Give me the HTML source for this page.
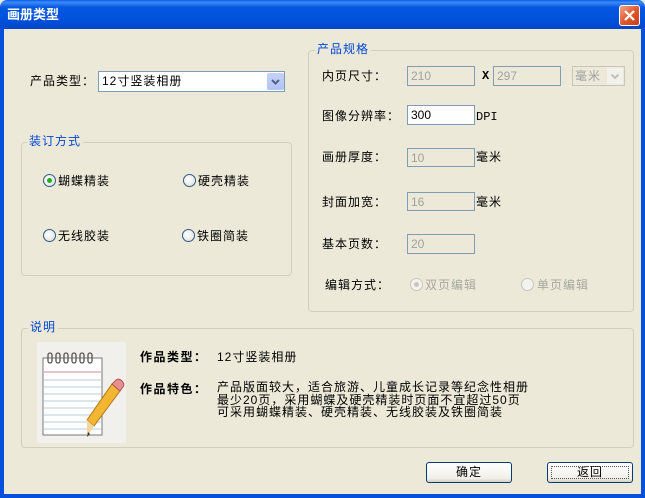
<!DOCTYPE html>
<html><head><meta charset="utf-8">
<style>
*{margin:0;padding:0;box-sizing:border-box}
body{width:645px;height:498px;overflow:hidden;background:#ece9d8;font-family:"Liberation Sans","Noto Sans CJK SC","WenQuanYi Zen Hei",sans-serif;font-size:12px;color:#000;position:relative}
.a{position:absolute;white-space:nowrap;line-height:14px;letter-spacing:1px}
.title{position:absolute;left:0;top:0;width:645px;height:29px;background:linear-gradient(#0a5fe8 0%,#3d8bf7 8%,#0758e0 25%,#0050dc 70%,#0346c8 100%);border-radius:7px 7px 0 0}
.bl{position:absolute;left:0;top:28px;width:4px;height:470px;background:#0750dc}
.br{position:absolute;right:0;top:28px;width:4px;height:470px;background:#0750dc}
.bb{position:absolute;left:0;top:494px;width:645px;height:4px;background:#0750dc}
.close{position:absolute;left:619px;top:5px;width:21px;height:21px;border-radius:3px;border:1px solid #fff;background:linear-gradient(135deg,#f0a58a,#e05a30 50%,#c63c18)}
.grp{position:absolute;border:1px solid #d0d0bf;border-radius:4px}
.leg{position:absolute;background:#ece9d8;color:#0046d5;padding:0 2px;line-height:14px;letter-spacing:1px}
.inp{position:absolute;border:1px solid #7f9db9;background:#ece9d8;color:#a0a0a0;padding-left:3px;line-height:18px;font-size:12px}
.rad{position:absolute;width:13px;height:13px;border-radius:50%;border:1px solid #2c5a88;background:radial-gradient(circle at 40% 40%,#fff,#dcdcd4)}
.radd{border-color:#c8c6bb;background:#f4f3ee}
.btn{position:absolute;height:21px;border:1px solid #003c74;border-radius:3px;background:linear-gradient(#fff,#f0f0ea 80%,#d6d0c5);text-align:center;line-height:19px;letter-spacing:1px}
</style></head><body>
<div class="title"></div>
<div class="a" style="left:7px;top:7px;color:#fff;font-weight:bold;font-size:13px;line-height:15px;letter-spacing:0">画册类型</div>
<div class="close"><svg width="19" height="19" style="position:absolute;left:0;top:0"><path d="M5 5L14 14M14 5L5 14" stroke="#fff" stroke-width="2.2"/></svg></div>
<div class="bl"></div><div class="br"></div><div class="bb"></div>

<div class="a" style="left:30px;top:74px">产品类型：</div>
<div style="position:absolute;left:98px;top:71px;width:187px;height:21px;border:1px solid #7f9db9;background:#fff"></div>
<div class="a" style="left:102px;top:74px">12寸竖装相册</div>
<div style="position:absolute;left:267px;top:73px;width:17px;height:17px;border-radius:2px;background:linear-gradient(#c6d3f7,#b0c4f4)"><svg width="17" height="17"><path d="M5 7L8.5 10.5L12 7" stroke="#4d6185" stroke-width="2" fill="none"/></svg></div>

<div class="grp" style="left:21px;top:142px;width:271px;height:134px"></div>
<div class="leg" style="left:27px;top:134px">装订方式</div>
<div class="rad" style="left:43px;top:174px"><div style="position:absolute;left:3px;top:3px;width:5px;height:5px;border-radius:50%;background:#22b022"></div></div>
<div class="a" style="left:58px;top:174px">蝴蝶精装</div>
<div class="rad" style="left:183px;top:174px"></div>
<div class="a" style="left:198px;top:174px">硬壳精装</div>
<div class="rad" style="left:43px;top:229px"></div>
<div class="a" style="left:58px;top:229px">无线胶装</div>
<div class="rad" style="left:182px;top:229px"></div>
<div class="a" style="left:197px;top:229px">铁圈简装</div>

<div class="grp" style="left:308px;top:50px;width:326px;height:262px"></div>
<div class="leg" style="left:315px;top:42px">产品规格</div>
<div class="a" style="left:322px;top:69px">内页尺寸：</div>
<div class="inp" style="left:407px;top:66px;width:68px;height:20px">210</div>
<div class="a" style="left:482px;top:69px;font-family:'Liberation Mono',monospace;font-weight:bold">X</div>
<div class="inp" style="left:493px;top:66px;width:68px;height:20px">297</div>
<div style="position:absolute;left:572px;top:66px;width:53px;height:20px;border:1px solid #c8c6bb;background:#ece9d8"></div>
<div class="a" style="left:575px;top:69px;color:#a0a0a0">毫米</div>
<div style="position:absolute;left:607px;top:68px;width:16px;height:16px;background:#f2f1ec"><svg width="16" height="16"><path d="M4.5 6.5L8 10L11.5 6.5" stroke="#c0c0b8" stroke-width="2" fill="none"/></svg></div>

<div class="a" style="left:322px;top:109px">图像分辨率：</div>
<div class="inp" style="left:407px;top:105px;width:68px;height:20px;background:#fff;color:#000">300</div>
<div class="a" style="left:476px;top:110px;font-family:'Liberation Mono',monospace;letter-spacing:0">DPI</div>

<div class="a" style="left:322px;top:150px">画册厚度：</div>
<div class="inp" style="left:407px;top:148px;width:68px;height:19px">10</div>
<div class="a" style="left:476px;top:150px">毫米</div>

<div class="a" style="left:322px;top:195px">封面加宽：</div>
<div class="inp" style="left:407px;top:192px;width:68px;height:19px">16</div>
<div class="a" style="left:476px;top:195px">毫米</div>

<div class="a" style="left:322px;top:237px">基本页数：</div>
<div class="inp" style="left:407px;top:234px;width:68px;height:20px">20</div>

<div class="a" style="left:325px;top:278px">编辑方式：</div>
<div class="rad radd" style="left:410px;top:278px"><div style="position:absolute;left:3px;top:3px;width:5px;height:5px;border-radius:50%;background:#c8c6bb"></div></div>
<div class="a" style="left:425px;top:278px;color:#a8a8a0">双页编辑</div>
<div class="rad radd" style="left:521px;top:278px"></div>
<div class="a" style="left:537px;top:278px;color:#a8a8a0">单页编辑</div>

<div class="grp" style="left:21px;top:328px;width:613px;height:120px"></div>
<div class="leg" style="left:28px;top:320px">说明</div>
<div style="position:absolute;left:37px;top:342px;width:89px;height:101px;background:#f1f0ec"></div>
<svg style="position:absolute;left:37px;top:342px" width="89" height="101">
<rect x="6" y="16" width="59" height="77" fill="#fff" stroke="#777"/>
<line x1="7" y1="30" x2="64" y2="30" stroke="#d88a90"/>
<g stroke="#b8cde0"><line x1="7" y1="38" x2="64" y2="38"/><line x1="7" y1="45" x2="64" y2="45"/><line x1="7" y1="52" x2="64" y2="52"/><line x1="7" y1="59" x2="64" y2="59"/><line x1="7" y1="66" x2="64" y2="66"/><line x1="7" y1="73" x2="64" y2="73"/><line x1="7" y1="80" x2="64" y2="80"/><line x1="7" y1="87" x2="64" y2="87"/></g>
<g fill="none" stroke="#555" stroke-width="1.3"><rect x="11" y="11" width="4" height="10" rx="2"/><rect x="19" y="11" width="4" height="10" rx="2"/><rect x="27" y="11" width="4" height="10" rx="2"/><rect x="35" y="11" width="4" height="10" rx="2"/><rect x="43" y="11" width="4" height="10" rx="2"/><rect x="51" y="11" width="4" height="10" rx="2"/></g>
<path d="M75 42L83 49L57 84L50 78Z" fill="#f2b632" stroke="#b07810"/>
<path d="M75 42L79 38Q82 36 85 39Q88 42 86 45L83 49Z" fill="#e89090" stroke="#b05858"/>
<path d="M50 78L57 84L50 95Z" fill="#f2d6a0"/>
<path d="M51 90L53 92L50 95Z" fill="#333"/>
</svg>
<div class="a" style="left:140px;top:350px;font-weight:bold;letter-spacing:1.5px">作品类型：</div>
<div class="a" style="left:217px;top:350px">12寸竖装相册</div>
<div class="a" style="left:140px;top:382px;font-weight:bold;letter-spacing:1.5px">作品特色：</div>
<div class="a" style="left:217px;top:381px;line-height:12.5px">产品版面较大，适合旅游、儿童成长记录等纪念性相册<br>最少20页，采用蝴蝶及硬壳精装时页面不宜超过50页<br>可采用蝴蝶精装、硬壳精装、无线胶装及铁圈简装</div>

<div class="btn" style="left:426px;top:462px;width:86px">确定</div>
<div class="btn" style="left:547px;top:462px;width:86px"><div style="position:absolute;left:3px;top:3px;right:3px;bottom:3px;border:1px dotted #555"></div>返回</div>
</body></html>
